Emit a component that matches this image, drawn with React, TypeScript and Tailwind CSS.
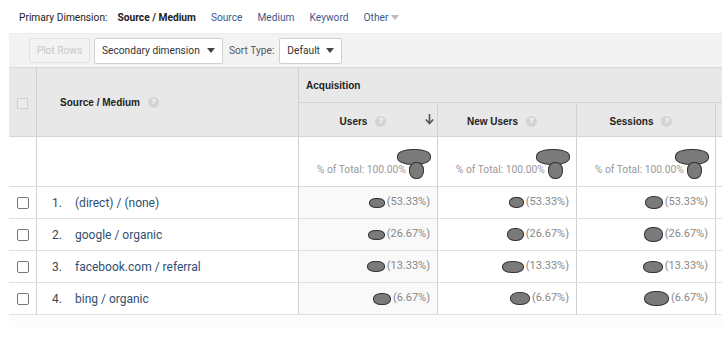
import React from "react";

const Q = () => (
  <span className="inline-flex items-center justify-center w-[11px] h-[11px] rounded-full bg-[#d4d4d4] text-white text-[8px] font-bold ml-[8px] leading-none" style={{ fontFamily: "Arial, 'Liberation Sans', sans-serif" }}>?</span>
);

const Blob = ({ w, h, cls = "" }: { w: number; h: number; cls?: string }) => (
  <span className={`inline-block rounded-[45%] bg-[#7a7a7a] border border-[#333] shrink-0 ${cls}`} style={{ width: w, height: h }} />
);

const Caret = ({ cls = "" }: { cls?: string }) => (
  <svg width="8" height="5" viewBox="0 0 8 5" className={cls}><path d="M0 0h8L4 5z" fill="#444" /></svg>
);

const rows = [
  { n: "1.", name: "(direct) / (none)", p: ["(53.33%)", "(53.33%)", "(53.33%)"], b: [[16, 10], [15, 11], [18, 13]] },
  { n: "2.", name: "google / organic", p: ["(26.67%)", "(26.67%)", "(26.67%)"], b: [[17, 10], [17, 13], [19, 15]] },
  { n: "3.", name: "facebook.com / referral", p: ["(13.33%)", "(13.33%)", "(13.33%)"], b: [[18, 11], [22, 12], [20, 12]] },
  { n: "4.", name: "bing / organic", p: ["(6.67%)", "(6.67%)", "(6.67%)"], b: [[18, 12], [20, 13], [25, 15]] },
];

export default function App() {
  const roboto = { fontFamily: "Roboto, 'Liberation Sans', sans-serif" };
  const arial = { fontFamily: "'Liberation Sans', Arial, sans-serif" };
  return (
    <div className="w-[722px] h-[337px] bg-white overflow-hidden text-[#333]" style={roboto}>
      {/* top bar */}
      <div className="h-[33px] flex items-center pl-[19px] text-[10.2px] whitespace-nowrap pt-[2px]">
        <span className="text-[#222]">Primary Dimension:</span>
        <span className="ml-[10px] font-bold text-[#222]">Source / Medium</span>
        <span className="ml-[15px] text-[#3a5a8c]">Source</span>
        <span className="ml-[15px] text-[#3a5a8c]">Medium</span>
        <span className="ml-[15px] text-[#3a5a8c]">Keyword</span>
        <span className="ml-[15px] text-[#3a5a8c] flex items-center">Other
          <svg width="8" height="5" viewBox="0 0 8 5" className="ml-[3px]"><path d="M0 0h8L4 5z" fill="#bbb" /></svg>
        </span>
      </div>
      {/* toolbar */}
      <div className="ml-[9px] h-[35px] bg-[#f3f3f3] border-t border-[#ececec] border-b border-b-[#d9d9d9] flex items-center pl-[20px] text-[10.2px] whitespace-nowrap">
        <div className="h-[25px] w-[61px] border border-[#e2e2e2] rounded-[2px] flex items-center justify-center text-[#c8c8c8] bg-[#f3f3f3]">Plot Rows</div>
        <div className="ml-[4px] h-[26px] w-[129px] border border-[#d0d0d0] rounded-[2px] bg-white flex items-center pl-[7px] text-[#333]">Secondary dimension<Caret cls="ml-auto mr-[7px]" /></div>
        <span className="ml-[6px] text-[#555]">Sort Type:</span>
        <div className="ml-[5px] h-[26px] w-[63px] border border-[#d0d0d0] rounded-[2px] bg-white flex items-center pl-[7px] text-[#333]">Default<Caret cls="ml-auto mr-[7px]" /></div>
      </div>
      {/* table */}
      <div className="ml-[9px]">
        {/* header */}
        <div className="flex h-[69px] bg-[#e8e8e8] border-b border-[#d4d4d4]">
          <div className="w-[28px] border-r border-[#d0d0d0] flex items-center justify-center">
            <span className="w-[11px] h-[11px] border border-[#cfcfcf] bg-[#ececec] mt-[2px]" />
          </div>
          <div className="w-[262px] border-r border-[#d0d0d0] flex items-center pl-[23px] text-[10px] font-bold text-[#222]" style={arial}>
            Source / Medium<Q />
          </div>
          <div className="flex-1 flex flex-col" style={arial}>
            <div className="h-[35px] border-b border-[#d4d4d4] flex items-center pl-[7px] text-[10px] font-bold text-[#222]">Acquisition</div>
            <div className="flex-1 flex text-[10px] font-bold text-[#222]">
              <div className="w-[139px] border-r border-[#d0d0d0] flex items-center justify-center relative pr-[10px] pt-[3px]">
                <span className="flex items-center">Users<Q /></span>
                <svg width="9" height="11" viewBox="0 0 9 11" className="absolute right-[3px] top-[11px]"><path d="M4.5 0v9M0.8 5.5l3.7 4 3.7-4" stroke="#555" strokeWidth="1.6" fill="none" /></svg>
              </div>
              <div className="w-[139px] border-r border-[#d0d0d0] flex items-center justify-center pr-[10px] pt-[3px]"><span className="flex items-center">New Users<Q /></span></div>
              <div className="w-[139px] border-r border-[#d0d0d0] flex items-center justify-center pr-[10px] pt-[3px]"><span className="flex items-center">Sessions<Q /></span></div>
              <div className="flex-1" />
            </div>
          </div>
        </div>
        {/* totals */}
        <div className="flex h-[50px] border-b border-[#dcdcdc] text-[10.3px] text-[#999]">
          <div className="w-[28px] border-r border-[#d0d0d0]" />
          <div className="w-[262px] border-r border-[#d0d0d0]" />
          {[0, 1, 2].map((i) => (
            <div key={i} className="w-[139px] border-r border-[#d0d0d0] flex flex-col items-end justify-center pr-[6px] pt-[4px]">
              <Blob w={34} h={16} />
              <div className="flex items-center -mt-[3px] mr-[7px]">
                <span>% of Total: 100.00% (</span>
                <Blob w={15} h={17} cls="-ml-[3px]" />
              </div>
            </div>
          ))}
          <div className="flex-1" />
        </div>
        {/* rows */}
        {rows.map((r, ri) => (
          <div key={ri} className="flex h-[32px] border-b border-[#e0e0e0]">
            <div className="w-[28px] border-r border-[#d0d0d0] flex items-center justify-center">
              <span className="w-[12px] h-[12px] border border-[#777] rounded-[2px] bg-white" />
            </div>
            <div className="w-[262px] border-r border-[#d0d0d0] flex items-center text-[12px]">
              <span className="ml-[15px] w-[23px] text-[#444]">{r.n}</span>
              <span className="text-[#2f4f72]">{r.name}</span>
            </div>
            {r.p.map((p, i) => (
              <div key={i} className={`w-[139px] border-r border-[#d0d0d0] flex items-center justify-end pr-[7px] text-[11px] text-[#888] ${i === 0 ? "bg-[#f9f9f9]" : ""}`}>
                <Blob w={r.b[i][0]} h={r.b[i][1]} cls="mr-[2px]" />
                <span>{p}</span>
              </div>
            ))}
            <div className="flex-1 bg-white" />
          </div>
        ))}
        <div className="h-[12px] bg-[#fcfcfc]" />
      </div>
    </div>
  );
}
